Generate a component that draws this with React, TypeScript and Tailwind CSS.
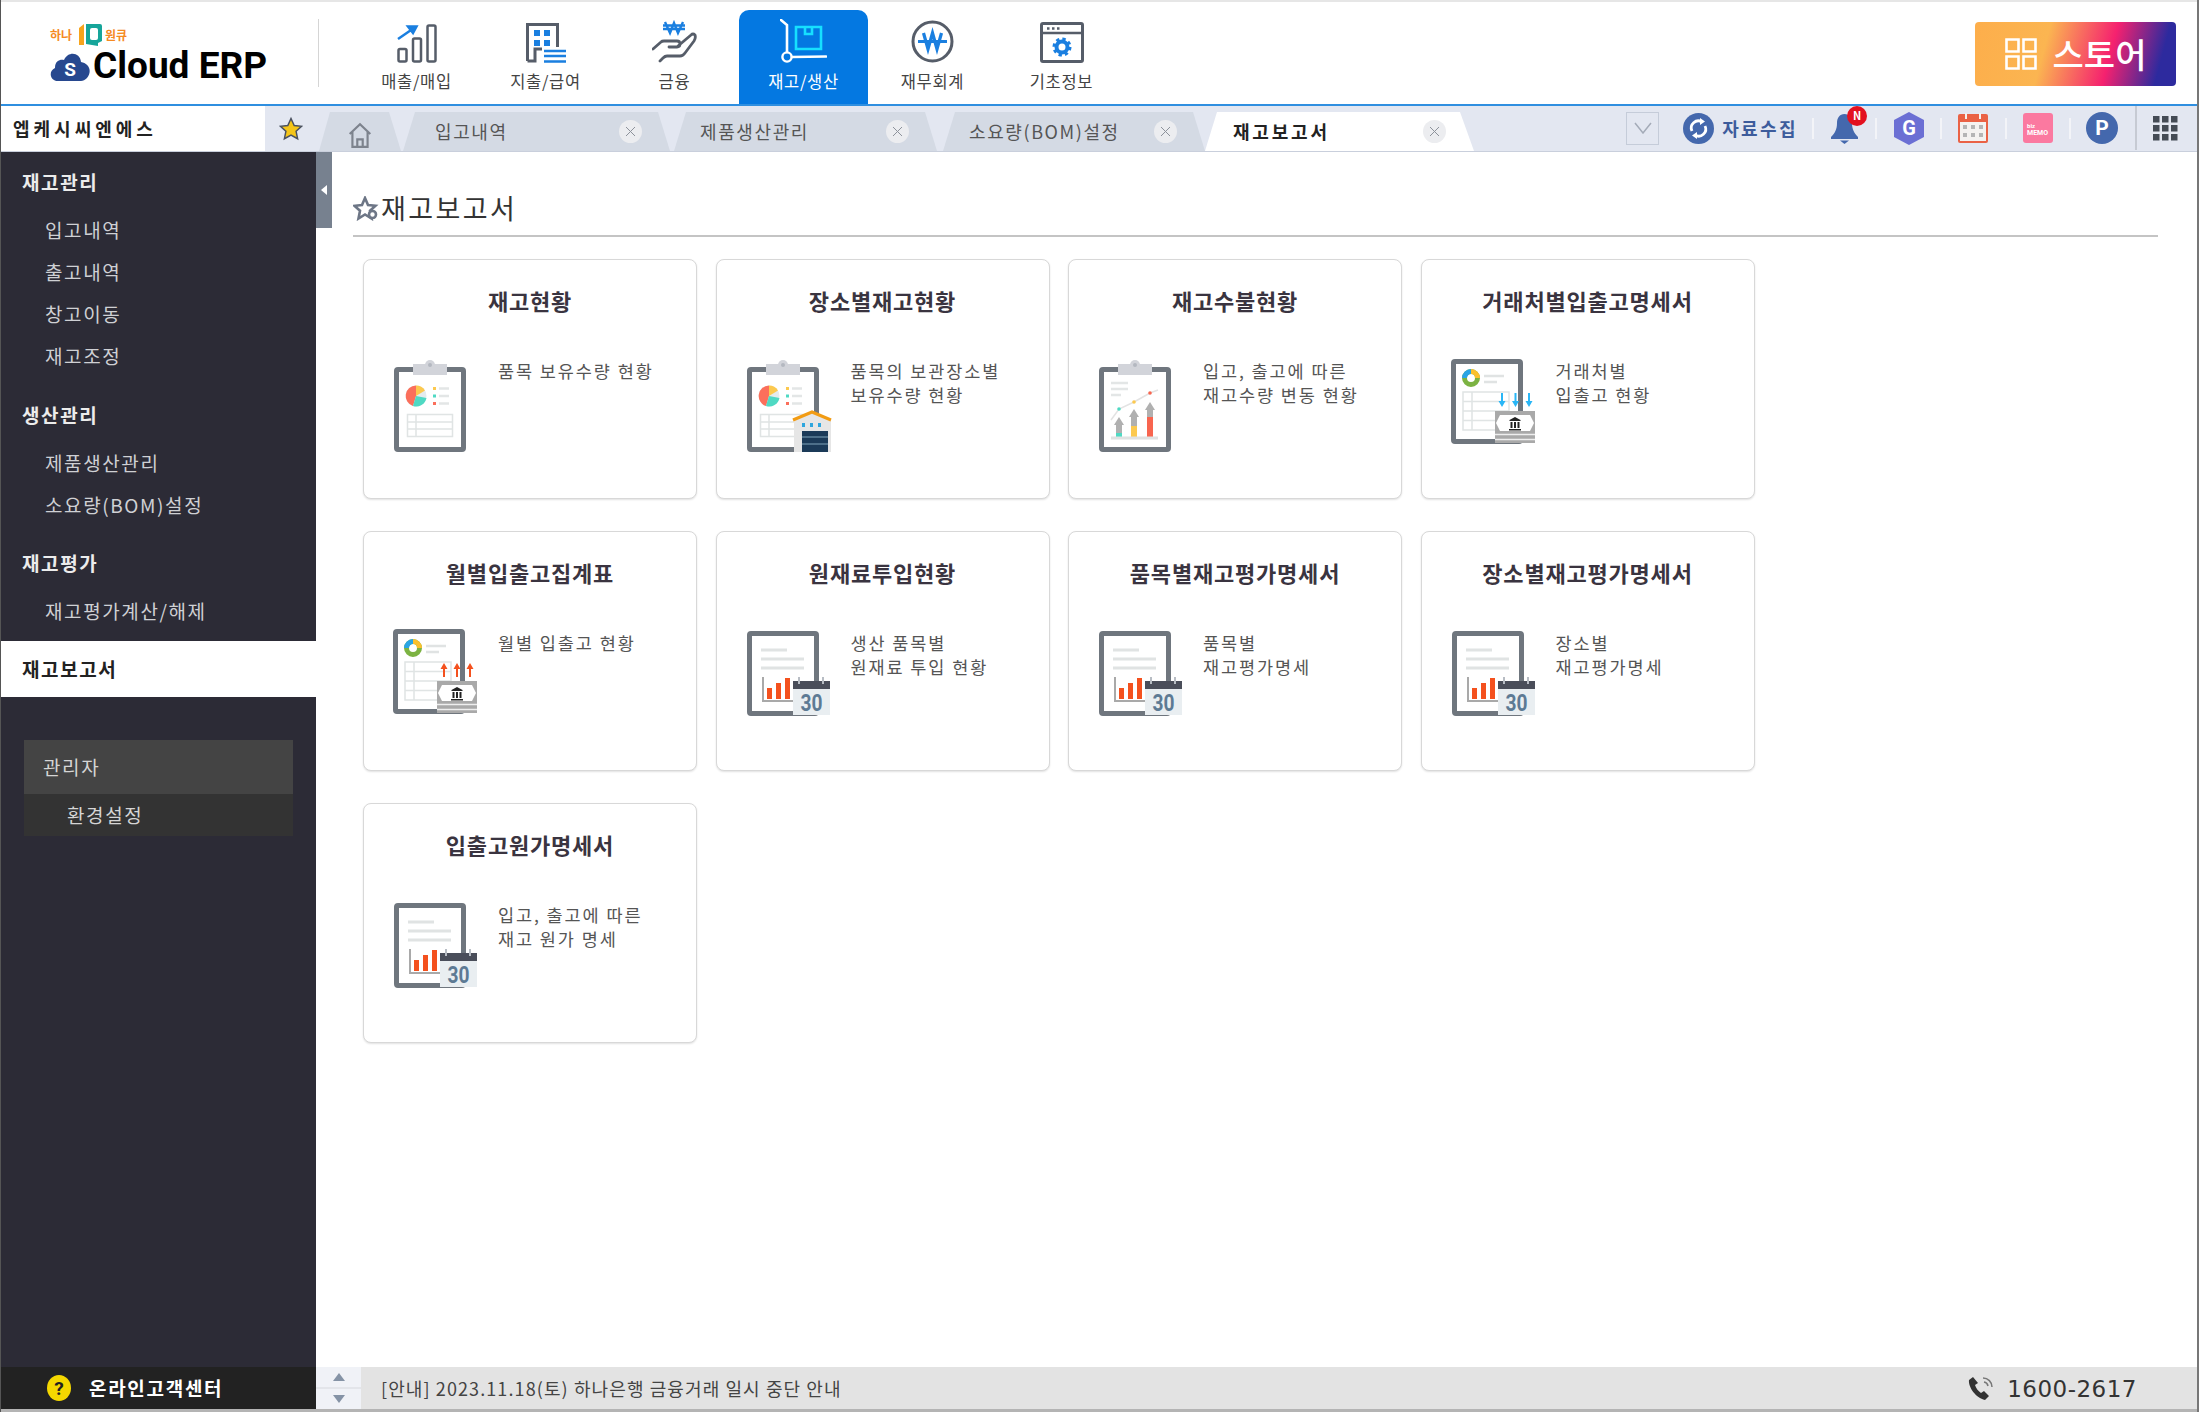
import React from "react";

const GRAY = "#565d69";
const BLUE = "#1a7fe0";

function SalesIcon() {
  return (
    <svg width="40" height="39" viewBox="0 0 40 39" fill="none">
      <rect x="1.5" y="25" width="8" height="12.5" rx="1.5" stroke={GRAY} strokeWidth="2.5" />
      <rect x="16" y="14.5" width="8" height="23" rx="1.5" stroke={GRAY} strokeWidth="2.5" />
      <rect x="30.5" y="1.5" width="8" height="36" rx="1.5" stroke={GRAY} strokeWidth="2.5" />
      <path d="M1 15 17 4M11 2.5h8.5L16 9z" stroke={BLUE} strokeWidth="2.5" fill={BLUE} />
    </svg>
  );
}

function BuildingIcon() {
  return (
    <svg width="40" height="40" viewBox="0 0 40 40" fill="none">
      <path d="M1.5 38V1.5h30V24M1.5 38H9V26h7" stroke={GRAY} strokeWidth="3" />
      <path d="M8 7h6v6H8zM18 7h6v6h-6zM8 17h6v6H8zM18 17h6v6h-6z" fill={BLUE} />
      <path d="M18 28h22M18 33h22M18 38.5h22" stroke={BLUE} strokeWidth="2.5" />
    </svg>
  );
}

function HandIcon() {
  return (
    <svg width="45" height="43" viewBox="0 0 45 43" fill="none">
      <path d="M13 2l5 11 4-10 4 10 5-11M11 5.5h22M11 9h22" stroke={BLUE} strokeWidth="2.4" />
      <path d="M1 29l8-7q1-1 3-1h13q3 0 3 3t-3 3h-8M26 26l13-11q2-2 4 0 1 3-1 6l-9 12q-2 3-5 3H15q-2 0-4 2l-3 3" stroke={GRAY} strokeWidth="2.8" strokeLinecap="round" strokeLinejoin="round" />
    </svg>
  );
}

function CartIcon() {
  return (
    <svg width="47" height="44" viewBox="0 0 47 44" fill="none">
      <path d="M1 1l6 5v27M12 38l34-.5" stroke="#fff" strokeWidth="2.6" strokeLinecap="round" />
      <circle cx="7" cy="38" r="4.6" stroke="#fff" strokeWidth="2.4" />
      <path d="M16 8h25v22H16zM25 8v7h7V8" stroke="#16e0ff" strokeWidth="2.6" />
    </svg>
  );
}

function WonIcon() {
  return (
    <svg width="43" height="43" viewBox="0 0 43 43" fill="none">
      <circle cx="21.5" cy="21.5" r="19.5" stroke={GRAY} strokeWidth="3" />
      <path d="M7 21.5h29M12.5 13l4.5 16 4.5-16 4.5 16 4.5-16" stroke={BLUE} strokeWidth="3.2" />
    </svg>
  );
}

function WindowIcon() {
  return (
    <svg width="44" height="41" viewBox="0 0 44 41" fill="none">
      <rect x="1.5" y="1.5" width="41" height="38" rx="1.5" stroke={GRAY} strokeWidth="3" />
      <path d="M1.5 11h41" stroke={GRAY} strokeWidth="2.5" />
      <path d="M7 6.5h2.5M12 6.5h2.5M17 6.5h2.5" stroke={GRAY} strokeWidth="2.5" />
      <circle cx="22" cy="25" r="5.5" stroke={BLUE} strokeWidth="4" />
      <circle cx="22" cy="25" r="8" stroke={BLUE} strokeWidth="3" strokeDasharray="3.3 3" />
    </svg>
  );
}

function RefreshIcon() {
  return (
    <svg width="31" height="31" viewBox="0 0 31 31" fill="none">
      <circle cx="15.5" cy="15.5" r="15.5" fill="#4468ad" />
      <path d="M9 18a7 7 0 0 1 10-9" stroke="#fff" strokeWidth="2.8" />
      <path d="M22 13a7 7 0 0 1-10 9" stroke="#fff" strokeWidth="2.8" />
      <path d="M17 5l5 3.5L17 12zM14 19l-5 3.5 5 3.5z" fill="#fff" />
    </svg>
  );
}

function BellIcon() {
  return (
    <svg width="27" height="31" viewBox="0 0 27 31" fill="#4468ad">
      <path d="M13.5 1c5 0 7.5 4 7.5 9 0 6 2 10 6 14v2H0v-2c4-4 6-8 6-14 0-5 2.5-9 7.5-9z" />
      <path d="M9 27.5h9L13.5 31z" />
    </svg>
  );
}

function HexIcon() {
  return (
    <svg width="30" height="33" viewBox="0 0 30 33">
      <path d="M15 0l15 8v17l-15 8-15-8V8z" fill="#6b6fd4" />
      <text x="15" y="23" textAnchor="middle" fontSize="20" fontWeight="700" fill="#fff" fontFamily="Roboto, sans-serif">G</text>
    </svg>
  );
}

function CalendarIcon() {
  return (
    <svg width="30" height="30" viewBox="0 0 30 30">
      <rect x="0" y="1" width="30" height="29" rx="2" fill="#ea6245" />
      <rect x="2" y="9" width="26" height="19" fill="#f4f2f0" />
      <path d="M8 0v6M22 0v6" stroke="#f4f2f0" strokeWidth="2" />
      <path d="M5 12h4v4H5zM13 12h4v4h-4zM21 12h4v4h-4zM5 20h4v4H5zM13 20h4v4h-4zM21 20h4v4h-4z" fill="#b5b5b5" />
    </svg>
  );
}

function MemoIcon() {
  return (
    <svg width="30" height="30" viewBox="0 0 30 30">
      <rect width="30" height="30" rx="3" fill="#fb79a0" />
      <text x="4" y="15" fontSize="6" fontWeight="700" fill="#fff" fontFamily="Roboto, sans-serif">biz</text>
      <text x="4" y="22" fontSize="7" fontWeight="700" fill="#fff" fontFamily="Roboto, sans-serif">MEMO</text>
    </svg>
  );
}

function PIcon() {
  return (
    <svg width="32" height="32" viewBox="0 0 32 32">
      <circle cx="16" cy="16" r="16" fill="#4468ad" />
      <text x="16" y="23" textAnchor="middle" fontSize="21" fontWeight="700" fill="#fff" fontFamily="Roboto, sans-serif">P</text>
    </svg>
  );
}

function GridIcon() {
  return (
    <svg width="25" height="25" viewBox="0 0 25 25" fill="#444b55">
      <path d="M0 0h6.5v6.5H0zM9 0h6.5v6.5H9zM18 0h6.5v6.5H18zM0 9h6.5v6.5H0zM9 9h6.5v6.5H9zM18 9h6.5v6.5H18zM0 18h6.5v6.5H0zM9 18h6.5v6.5H9zM18 18h6.5v6.5H18z" />
    </svg>
  );
}

function Logo() {
  return (
    <div className="w-[317px] shrink-0 whitespace-nowrap pt-[19px] pl-[49px]">
      <div className="flex h-[27px] items-center">
        <span className="w-[28px] text-[12px] font-bold leading-none text-[#f58a1f]">하나</span>
        <svg width="25" height="25" viewBox="0 0 25 25">
          <path d="M1 6l5-4v21H1z" fill="#f7a41d" />
          <path d="M8 2h14q2 0 2 2v15l-4 2v3l-12-2z" fill="#16a59a" />
          <rect x="12" y="6" width="8" height="12" rx="2" fill="#fff" />
        </svg>
        <span className="ml-[2px] text-[12px] font-bold leading-none text-[#f58a1f]">원큐</span>
      </div>
      <div className="flex items-center">
        <svg width="40" height="30" viewBox="0 0 40 30">
          <path d="M8 30C0 30-2 20 5 17 5 9 11 8 14 9 18 0 30 1 31 11c7 1 12 8 6 16-2 2-4 3-6 3z" fill="#27488f" />
          <text x="20" y="25" textAnchor="middle" fontSize="19" fontWeight="700" fill="#fff" fontFamily="Roboto, sans-serif">S</text>
        </svg>
        <span className="ml-[3px] font-['Roboto',sans-serif] text-[37px] font-bold leading-[36px] text-black">Cloud ERP</span>
      </div>
    </div>
  );
}

const navItems = [
  { label: "매출/매입", icon: <SalesIcon /> },
  { label: "지출/급여", icon: <BuildingIcon /> },
  { label: "금융", icon: <HandIcon /> },
  { label: "재고/생산", icon: <CartIcon />, active: true },
  { label: "재무회계", icon: <WonIcon /> },
  { label: "기초정보", icon: <WindowIcon /> },
];

function Header() {
  return (
    <header className="flex h-[106px] shrink-0 border-t-2 border-b-2 border-t-[#e6e6e6] border-b-[#2f8fe0] bg-white">
      <Logo />
      <div className="mt-[17px] h-[68px] w-px bg-[#d5d5d5]" />
      <nav className="ml-[33px] flex pt-[8px]">
        {navItems.map((item) => (
          <div
            key={item.label}
            className={`flex h-[94px] w-[129px] flex-col items-center rounded-t-[10px] ${item.active ? "bg-[#0478e1] text-white" : "text-[#444]"}`}
          >
            <div className="flex h-[53px] items-end justify-center">{item.icon}</div>
            <div className="mt-[6px] text-[16.5px] leading-[24px] tracking-[0.7px]">{item.label}</div>
          </div>
        ))}
      </nav>
      <div className="ml-auto mr-[21px] mt-[20px] flex h-[64px] w-[201px] items-center justify-center gap-[16px] rounded-[4px] bg-[linear-gradient(105deg,#fdae4b_0%,#fbb551_35%,#f5216f_66%,#2d2a9e_90%)] text-white">
        <svg width="32" height="32" viewBox="0 0 32 32" fill="none" stroke="#fff" strokeWidth="2.6">
          <path d="M1.5 1.5h12v12h-12zM18.5 1.5h12v12h-12zM1.5 18.5h12v12h-12zM18.5 18.5h12v12h-12z" />
        </svg>
        <span className="text-[34px] font-medium leading-none">스토어</span>
      </div>
    </header>
  );
}

const tabs = [
  { label: "입고내역", width: "w-[267px] ml-[2px]", text: "pl-[32px]" },
  { label: "제품생산관리", width: "w-[263px] ml-[4px]", text: "pl-[26px]" },
  { label: "소요량(BOM)설정", width: "w-[262px] ml-[6px]", text: "pl-[26px]" },
];

function CloseDot() {
  return (
    <span className="mr-[28px] flex h-[23px] w-[23px] items-center justify-center rounded-full bg-[#ecedf0]">
      <svg width="11" height="11" viewBox="0 0 11 11" stroke="#8d929b" strokeWidth="1">
        <path d="M1 1l9 9M10 1l-9 9" />
      </svg>
    </span>
  );
}

function TabBar() {
  return (
    <div className="flex h-[46px] shrink-0 border-b border-[#c9cfdc] bg-[#e3e7f1]">
      <div className="flex w-[264px] items-center whitespace-nowrap bg-white pl-[12px] text-[18px] font-bold tracking-[4px] text-[#222]">엡케시씨엔에스</div>
      <div className="flex w-[51px] items-center justify-center">
        <svg width="24" height="26" viewBox="0 0 24 24" fill="#f5c518" stroke="#4a5160" strokeWidth="1.5">
          <path d="M12 1.5l3.2 7 7.3.8-5.4 5 1.5 7.4L12 18l-6.6 3.7 1.5-7.4-5.4-5 7.3-.8z" />
        </svg>
      </div>
      <div className="flex flex-1 items-end pl-[3px]">
        <div className="flex h-[39px] w-[82px] items-center justify-center bg-[#d4dae4] pt-[6px] [clip-path:polygon(11px_0,calc(100%-12px)_0,100%_100%,0_100%)]">
          <svg width="26" height="26" viewBox="0 0 23 24" fill="none" stroke="#7d838d" strokeWidth="2">
            <path d="M2 11l9.5-9 9.5 9M4.5 9v14h14V9M9 23v-7h5v7" />
          </svg>
        </div>
        {tabs.map((tab) => (
          <div
            key={tab.label}
            className={`flex h-[39px] items-center justify-between bg-[#d4dae4] [clip-path:polygon(12px_0,calc(100%-12px)_0,100%_100%,0_100%)] ${tab.width} ${tab.text}`}
          >
            <span className="text-[18px] tracking-[1.6px] text-[#555]">{tab.label}</span>
            <CloseDot />
          </div>
        ))}
        <div className="flex h-[39px] w-[269px] items-center justify-between bg-white pl-[28px] [clip-path:polygon(12px_0,calc(100%-14px)_0,100%_100%,0_100%)]">
          <span className="text-[18px] font-bold tracking-[2.8px] text-[#222]">재고보고서</span>
          <CloseDot />
        </div>
        <div className="ml-auto flex h-[46px] items-center pr-[19px]">
          <div className="flex h-[33px] w-[33px] items-center justify-center border border-[#c5ccd9] bg-[#e3e7f1]">
            <svg width="18" height="12" viewBox="0 0 18 12" fill="none" stroke="#a4abb8" strokeWidth="1.5">
              <path d="M1 1l8 10 8-10" />
            </svg>
          </div>
          <div className="ml-[24px]"><RefreshIcon /></div>
          <span className="ml-[8px] text-[18px] font-bold tracking-[2.4px] text-[#3d5c9c]">자료수집</span>
          <span className="ml-[14px] h-[21px] w-[2px] bg-[#f3f4f8]" />
          <div className="relative ml-[17px]">
            <BellIcon />
            <span className="absolute -right-[9px] -top-[7px] flex h-[20px] w-[20px] items-center justify-center rounded-full bg-[#e3101f] text-[11px] font-bold leading-none text-white">N</span>
          </div>
          <span className="ml-[17px] h-[21px] w-[2px] bg-[#f3f4f8]" />
          <div className="ml-[17px]"><HexIcon /></div>
          <span className="ml-[16px] h-[21px] w-[2px] bg-[#f3f4f8]" />
          <div className="ml-[16px]"><CalendarIcon /></div>
          <span className="ml-[17px] h-[21px] w-[2px] bg-[#f3f4f8]" />
          <div className="ml-[16px]"><MemoIcon /></div>
          <span className="ml-[16px] h-[21px] w-[2px] bg-[#f3f4f8]" />
          <div className="ml-[15px]"><PIcon /></div>
          <span className="ml-[17px] h-[44px] w-[2px] bg-[#c6cad3]" />
          <div className="ml-[16px]"><GridIcon /></div>
        </div>
      </div>
    </div>
  );
}

const menuGroups = [
  { title: "재고관리", items: ["입고내역", "출고내역", "창고이동", "재고조정"], cls: "mt-[8px]" },
  { title: "생산관리", items: ["제품생산관리", "소요량(BOM)설정"], cls: "mt-[16px]" },
  { title: "재고평가", items: ["재고평가계산/해제"], cls: "mt-[15px]" },
];

function Sidebar() {
  return (
    <aside className="flex w-[315px] shrink-0 flex-col bg-[#2c2b36]">
      {menuGroups.map((group) => (
        <div key={group.title} className={group.cls}>
          <div className="flex h-[44px] items-center pl-[21px] text-[19px] font-bold tracking-[1.6px] text-[#ececec]">{group.title}</div>
          <div className="mt-[5px]">
            {group.items.map((item) => (
              <div key={item} className="flex h-[42px] items-center pl-[44px] text-[19px] tracking-[1.6px] text-[#cfd0d4]">{item}</div>
            ))}
          </div>
        </div>
      ))}
      <div className="mt-[9px] flex h-[56px] items-center bg-white pl-[21px] text-[19px] font-bold tracking-[1.6px] text-[#222]">재고보고서</div>
      <div className="mx-[23px] mt-[43px]">
        <div className="flex h-[54px] items-center bg-[#444444] pl-[19px] text-[19px] tracking-[1.6px] text-[#d5d5d5]">관리자</div>
        <div className="flex h-[42px] items-center bg-[#333333] pl-[43px] text-[19px] tracking-[1.6px] text-[#d5d5d5]">환경설정</div>
      </div>
    </aside>
  );
}

function PieBoard({ warehouse }: { warehouse?: boolean }) {
  return (
    <>
      <circle cx="22" cy="36" r="10.5" fill="#e4ebee" />
      <path d="M22 36V25.5a10.5 10.5 0 0 0-3 20.5z" fill="#fb6f5b" />
      <path d="M22 25.5a10.5 10.5 0 0 1 9 5L22 36z" fill="#fcc94f" />
      <path d="M22 36l10.5 2a10.5 10.5 0 0 1-13.5 8z" fill="#4fd9c3" />
      <path d="M39 27h3v3h-3z" fill="#fcc94f" />
      <path d="M39 34.5h3v3h-3z" fill="#4fd9c3" />
      <path d="M39 42h3v3h-3z" fill="#fb6f5b" />
      <path d="M45 28.5h10M45 36h10M45 43.5h10" stroke="#e3e6e6" strokeWidth="2.5" />
      <path d="M13.5 54.5h45v22h-45zM13.5 62h45M13.5 69h45M22 54.5v22" stroke="#e0e4e4" strokeWidth="1.5" fill="none" />
      {warehouse && (
        <g>
          <path d="M47 92V59l18-7 19 7v33z" fill="#e6e6e6" />
          <path d="M46 60l19-8 19 8" stroke="#f29c14" strokeWidth="3" fill="none" />
          <path d="M55 63h3v4h-3zM63 63h3v4h-3zM71 63h3v4h-3z" fill="#2ea6de" />
          <path d="M55 71h26v21H55z" fill="#1b3a58" />
          <path d="M55 77h26M55 84h26" stroke="#5f8199" strokeWidth="1.5" />
        </g>
      )}
    </>
  );
}

function ClipboardIcon({ kind }: { kind: "pie" | "warehouse" | "trend" }) {
  return (
    <svg width="86" height="94" viewBox="0 0 86 94" fill="none" className="overflow-visible">
      <g transform="translate(1 1)">
        <rect x="2.5" y="9.5" width="67" height="80" rx="1.5" fill="#fff" stroke="#6f767e" strokeWidth="5" />
        <rect x="19" y="4" width="34" height="11" fill="#d2d4da" />
        <circle cx="36" cy="5" r="5" fill="#d2d4da" />
        <circle cx="36" cy="5" r="2" fill="#b4b8c0" />
        {kind === "trend" ? (
          <>
            <path d="M12 23h17M12 29h17M12 35h10" stroke="#e3e6e6" strokeWidth="2.5" />
            <path d="M12 60l8-11 15-7 16-9 8-3" stroke="#e3e3e3" strokeWidth="1.5" />
            <path d="M15 65l5-8 5 8h-2v12h-6V65zM30 57l5-8 5 8h-2v20h-6V57zM46 50l5-8 5 8h-2v27h-6V50z" fill="#b0b0b0" />
            <path d="M17 73h6v4h-6z" fill="#4fd9c3" />
            <path d="M32 66h6v11h-6z" fill="#fcc94f" />
            <path d="M48 57h6v20h-6z" fill="#f8654f" />
            <path d="M12 78h47" stroke="#e0e2e2" strokeWidth="3" />
            <circle cx="20" cy="49" r="1.8" fill="#4fd9c3" />
            <circle cx="35" cy="42" r="1.8" fill="#fcc94f" />
            <circle cx="51" cy="33" r="1.8" fill="#f8654f" />
          </>
        ) : (
          <PieBoard warehouse={kind === "warehouse"} />
        )}
      </g>
    </svg>
  );
}

function LedgerIcon({ up }: { up?: boolean }) {
  const color = up ? "#f4511e" : "#29b6f6";
  return (
    <svg width="86" height="94" viewBox="0 0 86 94" fill="none" className="overflow-visible">
      <g transform={up ? "translate(0 -2)" : undefined}>
        <rect x="2.5" y="2.5" width="67" height="80" rx="1.5" fill="#fff" stroke="#6f767e" strokeWidth="5" />
        <circle cx="20" cy="19" r="6.5" stroke="#7cb342" strokeWidth="5" />
        <path d="M20 12.5a6.5 6.5 0 0 1 6.5 6.5" stroke="#fbc02d" strokeWidth="5" />
        <path d="M13.5 19A6.5 6.5 0 0 1 20 12.5" stroke="#29a4e6" strokeWidth="5" />
        <path d="M33 17h20M33 23h13" stroke="#e0e3e3" strokeWidth="2.5" />
        <path d="M12 33h46v38H12zM12 42.5h46M12 52h46M12 61.5h46M21 33v38" stroke="#e0e4e4" strokeWidth="1.5" />
        {(up ? [51, 64, 77] : [51, 64.5, 78]).map((x) =>
          up ? (
            <path key={x} d="M0 0l-3.5 6H-1v8h2V6h2.5z" fill={color} transform={`translate(${x} 34)`} />
          ) : (
            <path key={x} d="M0 14l-3.5-6H-1V0h2v8h2.5z" fill={color} transform={`translate(${x} 34)`} />
          ),
        )}
        <rect x="44" y="52" width="40" height="32" fill="#a9a9a9" />
        <path d="M49 56h30l4 8-4 8H49l-4-8z" fill="#fff" />
        <path d="M64 58l5.5 3v1h-11v-1zM59.5 63h2v6h-2zM63 63h2v6h-2zM66.5 63h2v6h-2zM58 70h12v1.5H58z" fill="#222" />
        <path d="M44 75.5h40M44 80.5h40" stroke="#eee" strokeWidth="1.5" />
      </g>
    </svg>
  );
}

function ReportIcon() {
  return (
    <svg width="86" height="94" viewBox="0 0 86 94" fill="none" className="overflow-visible">
      <g transform="translate(1 0)">
        <rect x="2.5" y="2.5" width="67" height="80" rx="1.5" fill="#fff" stroke="#6f767e" strokeWidth="5" />
        <path d="M14 19h26M14 28h43M14 37h43" stroke="#e0e3e3" strokeWidth="3" />
        <path d="M16 46v24h32" stroke="#a9a9a9" strokeWidth="2" />
        <path d="M20 57h5v11h-5zM29 52h5v16h-5zM38 47h5v21h-5z" fill="#f4511e" />
        <rect x="46" y="50" width="37" height="34" fill="#e9eef1" />
        <rect x="46" y="50" width="37" height="8" fill="#4a4e5a" />
        <path d="M52 46v7M76 46v7" stroke="#b8bdc4" strokeWidth="2" />
        <text x="64.5" y="79.5" textAnchor="middle" fontSize="23" fontWeight="700" fill="#5d7a94" fontFamily="Roboto, sans-serif" textLength="22" lengthAdjust="spacingAndGlyphs">30</text>
      </g>
    </svg>
  );
}

const cards = [
  { title: "재고현황", lines: ["품목 보유수량 현황"], icon: <ClipboardIcon kind="pie" /> },
  { title: "장소별재고현황", lines: ["품목의 보관장소별", "보유수량 현황"], icon: <ClipboardIcon kind="warehouse" /> },
  { title: "재고수불현황", lines: ["입고, 출고에 따른", "재고수량 변동 현황"], icon: <ClipboardIcon kind="trend" /> },
  { title: "거래처별입출고명세서", lines: ["거래처별", "입출고 현황"], icon: <LedgerIcon /> },
  { title: "월별입출고집계표", lines: ["월별 입출고 현황"], icon: <LedgerIcon up /> },
  { title: "원재료투입현황", lines: ["생산 품목별", "원재료 투입 현황"], icon: <ReportIcon /> },
  { title: "품목별재고평가명세서", lines: ["품목별", "재고평가명세"], icon: <ReportIcon /> },
  { title: "장소별재고평가명세서", lines: ["장소별", "재고평가명세"], icon: <ReportIcon /> },
  { title: "입출고원가명세서", lines: ["입고, 출고에 따른", "재고 원가 명세"], icon: <ReportIcon /> },
];

function ReportCard({ title, lines, icon }: (typeof cards)[number]) {
  return (
    <div className="h-[240px] w-[334px] rounded-[8px] border border-[#d8d8d8] bg-white shadow-[0_1px_2px_rgba(0,0,0,0.12)]">
      <div className="pt-[25px] text-center text-[22px] font-bold leading-[30px] tracking-[0.8px] text-[#3a3440]">{title}</div>
      <div className="mt-[44px] flex pl-[29px]">
        <div className="h-[94px] w-[105px] shrink-0">{icon}</div>
        <div className="text-[17.5px] leading-[24px] tracking-[1.9px] text-[#555]">
          {lines.map((line) => (
            <div key={line}>{line}</div>
          ))}
        </div>
      </div>
    </div>
  );
}

function Content() {
  return (
    <main className="relative flex-1 overflow-hidden bg-white pl-[37px] pr-[39px]">
      <div className="absolute left-0 top-0 flex h-[76px] w-[16px] items-center justify-center bg-[#77818f]">
        <span className="h-0 w-0 border-y-[5px] border-r-[6px] border-y-transparent border-r-white" />
      </div>
      <div className="flex h-[85px] items-end border-b-2 border-[#c4c4c4] pb-[10px]">
        <svg className="mb-[4px]" width="26" height="25" viewBox="0 0 26 25" fill="none" stroke="#6d7686" strokeWidth="2.6">
          <path d="M12 2l3 7 7.5.8-5.5 5 1.5 7.7L12 18.5l-6.500 4L7 14.800 1.500 9.800 9 9z" />
          <circle cx="19.5" cy="18.5" r="3.5" fill="#fff" />
        </svg>
        <h1 className="ml-[2px] text-[27px] font-normal leading-[34px] tracking-[2.4px] text-[#333]">재고보고서</h1>
      </div>
      <div className="ml-[10px] mt-[22px] grid grid-cols-[repeat(4,334px)] gap-x-[18.5px] gap-y-[32px]">
        {cards.map((card) => (
          <ReportCard key={card.title} {...card} />
        ))}
      </div>
    </main>
  );
}

function Footer() {
  return (
    <footer className="flex h-[45px] shrink-0 border-b-[3px] border-[#b4b4b4]">
      <div className="flex w-[315px] items-center bg-[#222222] pl-[46px]">
        <svg width="24" height="26" viewBox="0 0 24 26">
          <ellipse cx="12" cy="13" rx="12" ry="13" fill="#f5d800" />
          <text x="12" y="20" textAnchor="middle" fontSize="19" fontWeight="700" fill="#222" fontFamily="Roboto, sans-serif">?</text>
        </svg>
        <span className="ml-[18px] text-[19px] font-bold tracking-[1.7px] text-white">온라인고객센터</span>
      </div>
      <div className="flex w-[45px] flex-col bg-[#f0f2f7]">
        <div className="flex flex-1 items-center justify-center border-b-2 border-[#e3e5ea]">
          <span className="h-0 w-0 border-x-[6px] border-b-[8px] border-x-transparent border-b-[#8593a6]" />
        </div>
        <div className="flex flex-1 items-center justify-center">
          <span className="h-0 w-0 border-x-[6px] border-t-[8px] border-x-transparent border-t-[#8593a6]" />
        </div>
      </div>
      <div className="flex flex-1 items-center bg-[#e3e3e3] pl-[20px] pr-[60px]">
        <span className="text-[18px] tracking-[1.1px] text-[#444]">[안내] 2023.11.18(토) 하나은행 금융거래 일시 중단 안내</span>
        <svg className="ml-auto" width="28" height="26" viewBox="0 0 28 26" fill="#333">
          <path d="M5 2L1 5c-1 7 7 18 16 20l4-4-5-5-3 2c-3-2-5-5-6-8l3-2z" />
          <path d="M15 3a9 9 0 0 1 9 9M16 7a5 5 0 0 1 4 4" stroke="#777" strokeWidth="1.5" fill="none" />
        </svg>
        <span className="ml-[11px] mt-[2px] font-['DejaVu_Sans',sans-serif] text-[23px] leading-none tracking-[0.5px] text-[#333]">1600-2617</span>
      </div>
    </footer>
  );
}

export default function App() {
  return (
    <div className="flex h-screen w-full flex-col overflow-hidden border-l border-r-2 border-l-[#555] border-r-[#777] bg-white font-['Noto_Sans_CJK_KR','Noto_Sans',sans-serif]">
      <Header />
      <TabBar />
      <div className="flex min-h-0 flex-1">
        <Sidebar />
        <Content />
      </div>
      <Footer />
    </div>
  );
}
